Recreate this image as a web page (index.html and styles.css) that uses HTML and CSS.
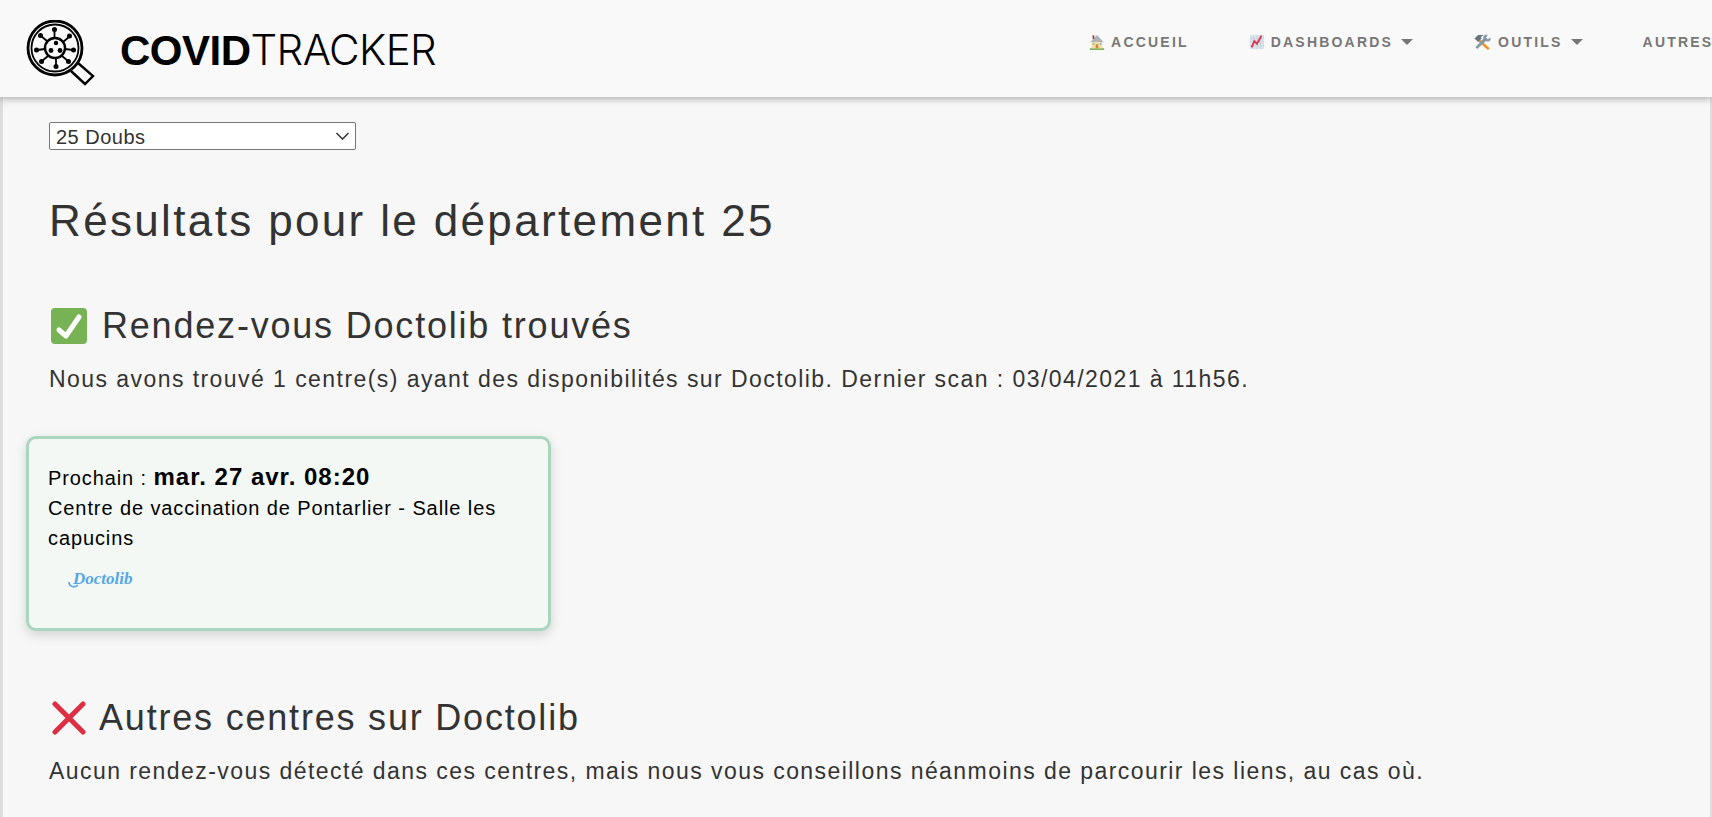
FILE: index.html
```html
<!DOCTYPE html>
<html lang="fr">
<head>
<meta charset="utf-8">
<title>CovidTracker</title>
<link rel="stylesheet" href="styles.css">
</head>
<body>
<header class="topbar">
  <a class="brand">
    <svg class="brand-icon" viewBox="0 0 70 66" fill="none" stroke="#000">
      <circle cx="29" cy="28" r="27" stroke-width="2.800"/>
      <circle cx="29" cy="28" r="23.500" stroke-width="1.800"/>
      <path d="M52 43 L67 56 L59 64 L45 51" stroke-width="2.400" fill="none" stroke-linejoin="miter"/>
      <circle cx="29" cy="28" r="10" stroke-width="2.400"/>
      <path stroke-width="1.800" d="M28.500 18V10M37 22l6-5M39 29l8 1M36 36l6 5M30 38v8M22 36l-6 5M19 29l-8 1M21 21l-6-5"/>
      <g fill="#000" stroke="none">
        <circle cx="28.500" cy="9.500" r="2.500"/><circle cx="43.500" cy="16" r="2.500"/><circle cx="47.500" cy="30" r="2.500"/><circle cx="42.500" cy="41.500" r="2.500"/><circle cx="30" cy="46.500" r="2.500"/><circle cx="15.500" cy="41.500" r="2.500"/><circle cx="10.500" cy="30" r="2.500"/><circle cx="14.500" cy="15.500" r="2.500"/>
        <circle cx="30" cy="23" r="2.200"/><circle cx="25" cy="30.500" r="2.400"/><circle cx="34" cy="30.500" r="2.400"/>
      </g>
    </svg>
    <span class="brand-name"><b>COVID</b><span class="brand-light">TRACKER</span></span>
  </a>
  <nav class="menu">
    <a class="menu-item">
      <svg class="emoji" viewBox="0 0 18 18"><rect x="1" y="16" width="16" height="2" fill="#7cb35a"/><path d="M3 8h12v8H3z" fill="#f7dfa0"/><path d="M9 1L1.500 9h15z" fill="#b0b4b8"/><rect x="4" y="1.500" width="2" height="4" fill="#a13f4f"/><rect x="7.500" y="11.500" width="3" height="4.500" fill="#c98a4b"/><rect x="4" y="10" width="2" height="2" fill="#6fb6dd"/><rect x="12" y="10" width="2" height="2" fill="#6fb6dd"/></svg>
      ACCUEIL
    </a>
    <a class="menu-item">
      <svg class="emoji" viewBox="0 0 18 18"><rect x="1" y="1" width="16" height="16" fill="#dbe3ec"/><path d="M5 1v16M9 1v16M13 1v16M1 5h16M1 9h16M1 13h16" stroke="#c3ceda" stroke-width=".7"/><path d="M3 15l3-7 3 3 5-9" fill="none" stroke="#e0304a" stroke-width="2"/></svg>
      DASHBOARDS<i class="caret"></i>
    </a>
    <a class="menu-item">
      <svg class="emoji emoji-wide" viewBox="0 0 20 18"><path d="M6 5l12 11-2 2L4 7z" fill="#f19020"/><path d="M1 5l4-4h5l1 1-3 1 1 2-4 4-1-1z" fill="#66757f"/><path d="M14 8l-10 9-2-2 9-10c-1-2 1-5 5-4l-2 3 2 2 3-2c1 4-2 5-5 4z" fill="#8899a6"/></svg>
      OUTILS<i class="caret"></i>
    </a>
    <a class="menu-item">AUTRES</a>
  </nav>
</header>
<main class="content">
  <div class="dept-wrap">
    <select class="dept"><option>25 Doubs</option></select>
    <svg class="dept-arrow" viewBox="0 0 14 8" fill="none" stroke="#333" stroke-width="1.500"><path d="M1 1l6 6 6-6"/></svg>
  </div>
  <h1 class="title">Résultats pour le département 25</h1>
  <h2 class="section section-ok">
    <svg class="mark" viewBox="0 0 36 36"><rect width="36" height="36" rx="4" fill="#77b255"/><path d="M8 22l7 6L28 9" fill="none" stroke="#fff" stroke-width="5" stroke-linecap="round" stroke-linejoin="round"/></svg>
    Rendez-vous Doctolib trouvés
  </h2>
  <p class="lead">Nous avons trouvé 1 centre(s) ayant des disponibilités sur Doctolib. Dernier scan : 03/04/2021 à 11h56.</p>
  <article class="card">
    <div class="next">Prochain : <strong>mar. 27 avr. 08:20</strong></div>
    <div class="place">Centre de vaccination de Pontarlier - Salle les capucins</div>
    <div class="logo-doctolib"><svg viewBox="0 0 14 24" class="swoop" fill="none" stroke="#55a6e6" stroke-width="1.600"><path d="M1 15c0 5 6 6 9 3"/></svg><span>Doctolib</span></div>
  </article>
  <h2 class="section section-no">
    <svg class="mark mark-x" viewBox="0 0 34 34"><path d="M3 3l28 28M31 3L3 31" stroke="#dd2e44" stroke-width="5" stroke-linecap="round"/></svg>
    Autres centres sur Doctolib
  </h2>
  <p class="lead">Aucun rendez-vous détecté dans ces centres, mais nous vous conseillons néanmoins de parcourir les liens, au cas où.</p>
</main>
</body>
</html>
```
FILE: styles.css
```css
* { box-sizing: border-box; }
html, body { margin: 0; height: 100%; overflow: hidden; }
body {
  background: #f7f7f7;
  color: #333;
  font-family: "Liberation Sans", Arial, sans-serif;
}
.topbar {
  position: relative;
  z-index: 2;
  display: flex;
  align-items: flex-start;
  height: 97px;
  padding-left: 26px;
  background: #f9f9f9;
  box-shadow: 0 2px 7px rgba(0, 0, 0, .3);
  overflow: hidden;
}
.brand { display: flex; align-items: flex-start; color: #000; }
.brand-icon { width: 70px; height: 66px; margin-top: 20px; flex: none; }
.brand-name {
  margin: 24px 0 0 24px;
  font-size: 42px;
  line-height: 52px;
  letter-spacing: -.5px;
  white-space: nowrap;
}
.brand-light { font-family: Inter, "Liberation Sans", sans-serif; font-weight: 300; letter-spacing: -.6px; }
.menu {
  display: flex;
  flex: none;
  gap: 60px;
  margin-left: 653px;
  padding-top: 34px;
  font-size: 14px;
  font-weight: 700;
  line-height: 16px;
  letter-spacing: 2.2px;
  color: #777;
  white-space: nowrap;
}
.menu-item { display: flex; align-items: center; }
.emoji { width: 16px; height: 16px; margin-right: 6px; flex: none; }
.emoji-wide { width: 19px; }
.caret {
  width: 0;
  height: 0;
  margin-left: 8px;
  border-left: 6.500px solid transparent;
  border-right: 6.500px solid transparent;
  border-top: 6px solid #777;
}
.content {
  height: 720px;
  padding: 25px 0 0 46px;
  border-left: 3px solid #ddd;
  border-right: 2px solid #ddd;
}
.dept-wrap { position: relative; width: 307px; }
.dept {
  display: block;
  width: 307px;
  height: 28px;
  padding: 2px 0 0 6px;
  background: #fff;
  border: 1px solid #767676;
  border-radius: 2px;
  appearance: none;
  font: 20px "Liberation Sans", Arial, sans-serif;
  letter-spacing: .5px;
  color: #333;
}
.dept-arrow {
  position: absolute;
  top: 10px;
  right: 6px;
  width: 15px;
  height: 8px;
  pointer-events: none;
}
.title {
  margin: 44px 0 0;
  font-size: 44px;
  line-height: 54px;
  font-weight: 400;
  letter-spacing: 2.350px;
}
.section {
  display: flex;
  align-items: center;
  font-size: 36px;
  line-height: 44px;
  font-weight: 400;
  letter-spacing: 1.800px;
}
.section-ok { margin: 56px 0 0 2px; }
.section-no { margin: 65px 0 0 3px; }
.mark { width: 36px; height: 36px; margin-right: 15px; flex: none; }
.mark-x { width: 34px; height: 34px; margin-right: 13px; }
.lead {
  margin: 15px 0 0;
  font-size: 23px;
  line-height: 32px;
  letter-spacing: 1.440px;
}
.card {
  width: 525px;
  height: 195px;
  margin: 41px 0 0 -23px;
  padding: 23px 19px 0;
  background: #f3f8f5;
  border: 3px solid #aad6bf;
  border-radius: 10px;
  box-shadow: 0 4px 12px rgba(0, 0, 0, .15);
  color: #000;
  font-size: 20px;
  line-height: 30px;
  letter-spacing: .9px;
}
.next strong { font-size: 24px; letter-spacing: 1px; }
.logo-doctolib {
  display: flex;
  align-items: center;
  margin: 14px 0 0 20px;
  font: italic 700 17px "Liberation Serif", serif;
  letter-spacing: 0;
  color: #55a6e6;
  line-height: 24px;
}
.swoop { width: 14px; height: 24px; flex: none; margin-right: -9px; }
```
